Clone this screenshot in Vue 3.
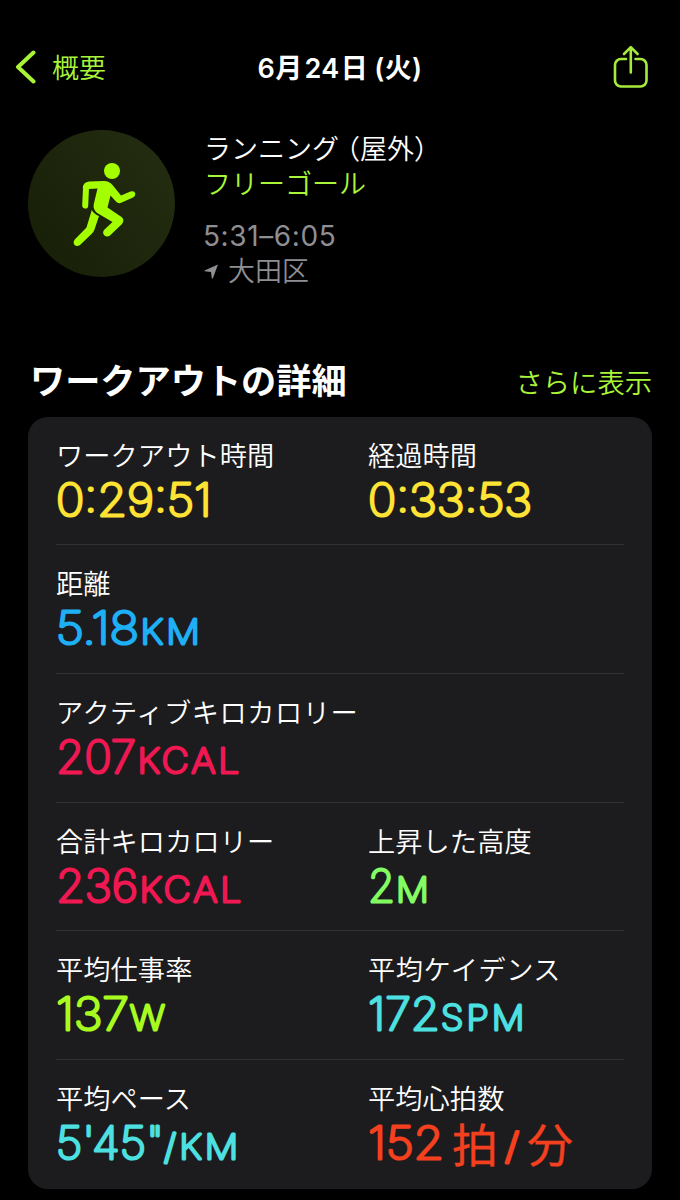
<script setup>
const yellow = '#fee234'
const pink = '#f01853'
const teal = '#4de0e0'
const red = '#f4401f'

// Each segment: text, start offset, advance width, font size
const rows = [
  [
    { label: 'ワークアウト時間', color: yellow, parts: [{ t: '0:29:51', x: 0, w: 155.5, s: 45 }] },
    { label: '経過時間', color: yellow, parts: [{ t: '0:33:53', x: 0, w: 164, s: 45 }] },
  ],
  [{ label: '距離', color: '#1eaff5', parts: [{ t: '5.18', x: 0, w: 83, s: 45 }, { t: 'KM', x: 84.5, w: 62.5, s: 34.5, unit: true }] }],
  [{ label: 'アクティブキロカロリー', wide: true, color: pink, parts: [{ t: '207', x: 0, w: 80, s: 45 }, { t: 'KCAL', x: 81.5, w: 105, s: 34.5, unit: true }] }],
  [
    { label: '合計キロカロリー', color: pink, parts: [{ t: '236', x: 0, w: 82, s: 45 }, { t: 'KCAL', x: 83.5, w: 105, s: 34.5, unit: true }] },
    { label: '上昇した高度', color: '#83fb63', parts: [{ t: '2', x: 0, w: 27, s: 45 }, { t: 'M', x: 28, w: 36, s: 34.5, unit: true }] },
  ],
  [
    { label: '平均仕事率', color: '#a8fb20', parts: [{ t: '137', x: 0, w: 73, s: 45 }, { t: 'W', x: 74, w: 38, s: 34.5, unit: true }] },
    { label: '平均ケイデンス', wide: true, color: teal, parts: [{ t: '172', x: 0, w: 72, s: 45 }, { t: 'SPM', x: 73, w: 86.5, s: 34.5, unit: true }] },
  ],
  [
    { label: '平均ペース', color: teal, parts: [{ t: '5\'45"', x: 0, w: 108, s: 45 }, { t: '/KM', x: 108, w: 77.5, s: 34.5, unit: true }] },
    {
      label: '平均心拍数',
      color: red,
      parts: [
        { t: '152', x: 0, w: 76, s: 45 },
        { t: '拍', x: 84, w: 46, s: 46, cjk: true },
        { t: '/', x: 137, w: 14, s: 36 },
        { t: '分', x: 159, w: 46, s: 46, cjk: true },
      ],
    },
  ],
]
</script>

<template>
  <div class="screen">
    <header class="nav">
      <div class="back">
        <svg class="chevron" width="21" height="34" viewBox="0 0 21 34">
          <path d="M18.500 2.500 3 17 18.500 31.500" />
        </svg>
        <span>概要</span>
      </div>
      <h1 class="date"><b>6</b>月<b class="day">24</b>日<b class="paren">(</b>火<b>)</b></h1>
      <svg class="share" width="36" height="44" viewBox="0 0 36 44">
        <path d="M13 14H8a6 6 0 0 0-6 6v15.500a6 6 0 0 0 6 6h19.500a6 6 0 0 0 6-6V20a6 6 0 0 0-6-6h-5" />
        <path d="M17.800 27.500V3M11 9l6.800-6.800L24.600 9" />
      </svg>
    </header>

    <section class="summary">
      <div class="badge">
        <svg width="147" height="147" viewBox="0 0 147 147">
          <circle cx="84" cy="41" r="8" />
          <path class="limb" d="M57.200 75.500 58 58" />
          <path d="M54.700 58Q55 52 61 51.400L76 51Q81 51 84.500 55L93 65.500 102.500 61.600Q106.500 60.600 107.300 63.600 107.600 66 105 67.500L92.500 73Q90 73.600 88 71.500L82.500 65.500 79.500 77.500 93.500 87Q97 90 94 94L82 105.500Q79 107.500 76.500 105.500 74 103 76 100L84.500 92 70 83.500Q64.500 80 65.800 74L69.500 58.500 61 59Z" />
          <path d="M63.800 80Q66 84 71 86L66.500 99.500Q65.500 102.500 63.500 104L52 115Q49 117.200 46.500 115 44.500 112 47 109.200L58.500 97.500Z" />
        </svg>
      </div>
      <div class="info">
        <p class="kind">ランニン<span class="tight">グ</span>（屋外）</p>
        <p class="goal">フリーゴール</p>
        <p class="time">5:31–6:05</p>
        <p class="place">
          <svg width="15" height="17" viewBox="0 0 15 17"><path d="M14 1.500 8.800 15.500 7.800 15.500 7 9 .5 8.300.5 7.400Z" /></svg>
          <span>大田区</span>
        </p>
      </div>
    </section>

    <div class="heading">
      <h2>ワークアウトの詳細</h2>
      <span class="more">さらに表示</span>
    </div>

    <section class="card">
      <div v-for="(row, i) in rows" :key="i" class="row">
        <div v-for="cell in row" :key="cell.label" class="cell">
          <div class="label" :class="{ wide: cell.wide }">{{ cell.label }}</div>
          <svg class="value" width="250" height="58" viewBox="0 0 250 58" :style="{ color: cell.color }">
            <text
              v-for="p in cell.parts"
              :key="p.t"
              :class="{ cjk: p.cjk, unit: p.unit }"
              :x="p.x"
              :y="p.cjk ? 43.5 : 40.5"
              :font-size="p.s"
              :textLength="p.w"
              lengthAdjust="spacingAndGlyphs"
            >{{ p.t }}</text>
          </svg>
        </div>
      </div>
    </section>
  </div>
</template>

<style>
body {
  background: #000;
}
</style>

<style scoped>
.screen {
  box-sizing: border-box;
  width: 680px;
  height: 1200px;
  overflow: hidden;
  background: #000;
  color: #fff;
  font-family: Inter, "Noto Sans CJK JP", sans-serif;
  font-size: 27px;
  font-weight: 350;
}
h1, h2, p {
  margin: 0;
}
.nav {
  display: grid;
  grid-template-columns: 1fr auto 1fr;
  align-items: center;
  height: 44px;
  padding: 45px 15px 0 15px;
}
.back {
  display: flex;
  align-items: center;
  gap: 16px;
  color: #a9f53a;
  line-height: 40px;
}
.back span {
  padding-top: 3px;
}
.chevron path {
  fill: none;
  stroke: #a9f535;
  stroke-width: 4;
  stroke-linecap: round;
  stroke-linejoin: round;
}
.date {
  padding-top: 2px;
  font-family: "Noto Sans CJK JP", sans-serif;
  font-size: 27px;
  font-weight: 600;
  line-height: 40px;
  letter-spacing: 0.400px;
  white-space: nowrap;
}
.date b {
  font-family: Inter, sans-serif;
  font-weight: 600;
}
.day {
  margin: 0 1px 0 2px;
}
.paren {
  margin-left: 6px;
}
.share {
  justify-self: end;
  margin-right: 16px;
}
.share path {
  fill: none;
  stroke: #a5ea3c;
  stroke-width: 2.6;
  stroke-linecap: round;
  stroke-linejoin: round;
}
.summary {
  display: flex;
  gap: 29px;
  padding: 41px 28px 0;
}
.badge {
  width: 147px;
  height: 147px;
  border-radius: 50%;
  background: linear-gradient(55deg, #161e06, #252e12);
}
.badge svg {
  display: block;
  fill: #a4ff00;
}
.badge .limb {
  stroke: #a4ff00;
  stroke-width: 6;
  stroke-linecap: round;
}
.info {
  padding-top: 1.500px;
  white-space: nowrap;
}
.kind, .goal, .time, .place {
  height: 35px;
  line-height: 35px;
}
.tight {
  letter-spacing: -6px;
}
.goal {
  color: #a9f53a;
}
.time {
  margin-top: 17px;
  margin-left: -1px;
  color: #8e8e93;
  font-size: 28px;
  font-weight: 400;
  letter-spacing: 0.600px;
}
.place {
  display: flex;
  align-items: center;
  gap: 9px;
  color: #8e8e93;
}
.place path {
  fill: #8e8e93;
}
.heading {
  display: flex;
  align-items: center;
  justify-content: space-between;
  height: 50px;
  margin-top: 67px;
  padding: 0 28px 0 30px;
}
.heading h2 {
  font-size: 35.200px;
  font-weight: 700;
  line-height: 50px;
}
.more {
  padding-top: 6px;
  color: #a9f53a;
  font-size: 27.300px;
  line-height: 50px;
}
.card {
  display: grid;
  grid-template-rows: repeat(6, 1fr);
  box-sizing: border-box;
  height: 772px;
  margin: 11px 28px 0;
  padding: 0 28px;
  border-radius: 20px;
  background: #1c1c1e;
}
.row {
  display: grid;
  grid-template-columns: 312px 1fr;
  border-bottom: 1px solid #303032;
}
.row:last-child {
  border-bottom: 0;
}
.label {
  height: 36px;
  margin-top: 22px;
  font-size: 27.200px;
  line-height: 36px;
  letter-spacing: 0.100px;
  white-space: nowrap;
}
.label.wide {
  letter-spacing: 0.550px;
}
.value {
  display: block;
  overflow: visible;
}
.value text {
  fill: currentColor;
  stroke: currentColor;
  stroke-width: 3.200;
  stroke-linecap: round;
  stroke-linejoin: round;
  font-family: Inter, sans-serif;
  font-weight: 100;
}
.value .unit {
  letter-spacing: 3px;
}
.value .cjk {
  stroke-width: 0.300;
  font-family: "Noto Sans CJK JP", sans-serif;
  font-weight: 400;
}
</style>
